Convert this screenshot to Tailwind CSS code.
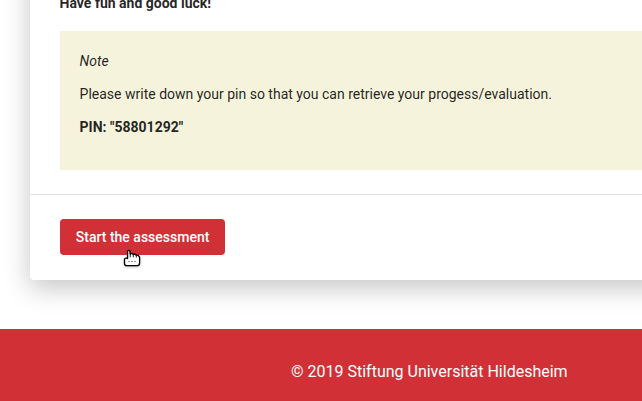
<!DOCTYPE html>
<html lang="en">
<head>
<meta charset="utf-8">
<title>Assessment</title>
<script src="https://cdn.jsdelivr.net/npm/@tailwindcss/browser@4"></script>
</head>
<body class="relative flex h-[401px] flex-col overflow-hidden bg-white font-['Roboto',sans-serif] text-[14px] leading-5 text-black/87">
  <main class="h-[329px] shrink-0 overflow-hidden pl-[29.6px]">
    <section class="-mt-10 h-80 w-[800px] rounded bg-white pt-[33px] shadow-[0_8px_27px_rgba(0,0,0,0.23)]">
      <div class="px-[30px]">
        <p class="font-bold">Have fun and good luck!</p>
        <div class="mt-[18px] flex h-[139px] flex-col gap-[13px] bg-[#f5f3dc] p-5">
          <p class="italic">Note</p>
          <p>Please write down your pin so that you can retrieve your progess/evaluation.</p>
          <p class="font-bold">PIN: "58801292"</p>
        </div>
      </div>
      <div class="mt-6 border-t border-black/12 px-[30px] pt-6">
        <button class="h-9 w-[165px] cursor-pointer rounded bg-[#d13036] pl-[1px] font-medium text-white">Start the assessment</button>
      </div>
    </section>
  </main>
  <footer class="h-[72px] shrink-0 bg-[#d13036] pt-[31px] pl-[291px] text-base text-white">© 2019 Stiftung Universität Hildesheim</footer>
  <svg class="absolute top-[249px] left-[123px] drop-shadow-[0_1px_1px_rgba(0,0,0,0.25)]" width="19" height="19" viewBox="0 0 19 19" fill="none">
    <path d="M4.6 9.5V2.6Q4.6 1.4 5.8 1.4Q7 1.4 7 2.6V4.8Q9.3 4.1 10.2 5.4Q12.2 4.9 13.2 6.2Q15.6 5.8 16.6 8.2V13.5Q16.6 16.7 14.2 16.7H4.2Q1.5 16.7 1.5 14.5V10.5Q1.5 8.8 4.6 9Z" fill="#fff" stroke="#000" stroke-width="1.3" stroke-linejoin="round"/>
    <path d="M7.3 5V8.3M10.3 5.4V8.3M13.3 6.4V8.5" stroke="#000" stroke-width="0.9"/>
    <path d="M5 12.5H14" stroke="#999" stroke-width="1" stroke-dasharray="2 1"/>
  </svg>
</body>
</html>
